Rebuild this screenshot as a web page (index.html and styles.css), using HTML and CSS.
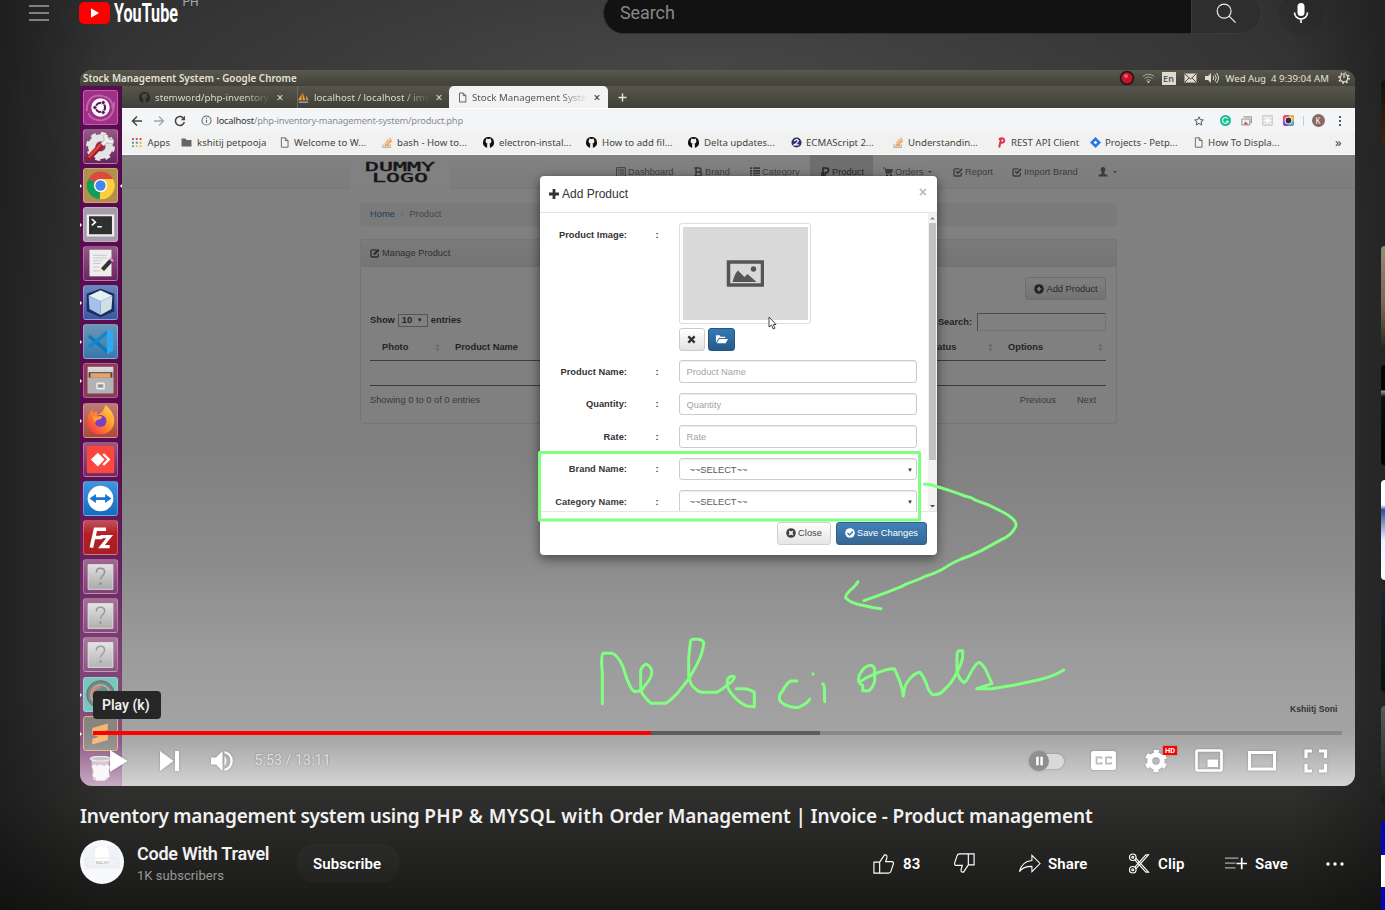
FILE: index.html
```html
<!DOCTYPE html>
<html lang="en">
<head>
<meta charset="utf-8">
<title>Inventory management system using PHP &amp; MYSQL - YouTube</title>
<link rel="stylesheet" href="styles.css">
</head>
<body>
<svg class="defs" width="0" height="0">
  <defs>
    <linearGradient id="gloss" x1="0" y1="0" x2="0" y2="1"><stop offset="0" stop-color="#dedede"/><stop offset="1" stop-color="#9d9d9d"/></linearGradient>
    <linearGradient id="fire" x1="1" y1="0" x2="0" y2="1"><stop offset="0" stop-color="#ffe54a"/><stop offset=".5" stop-color="#ff8a2a"/><stop offset="1" stop-color="#f5244b"/></linearGradient>
    <symbol id="github" viewBox="0 0 16 16"><path fill="currentColor" d="M8 0a8 8 0 0 0-2.500 15.600c.4.1.5-.2.5-.4v-3.700q0-1.500.6-2C4.500 9.200 3.800 8 3.800 6.300c0-1 .3-1.600.8-2.200-.1-.6-.2-1.300.2-2 .8 0 1.500.5 2.100.9q1.100-.2 2.200 0c.6-.4 1.300-.9 2.100-.9.4.7.3 1.400.2 2 .5.6.8 1.200.8 2.200 0 1.700-.7 2.900-2.800 3.200q.6.500.6 2v3.700c0 .2.1.5.5.4A8 8 0 0 0 8 0z"/></symbol>
    <symbol id="doc" viewBox="0 0 12 14"><path d="M2 1h5l3.500 3.500V13H2zM7 1v3.500h3.500" fill="none" stroke="currentColor" stroke-width="1.200"/></symbol>
    <symbol id="stack" viewBox="0 0 12 12"><path d="M1 8v3.300h8V8" fill="none" stroke="#b9b3aa" stroke-width="1.200"/><path d="M2.500 9.500h5M2.800 7.400l4.900.8M3.800 5l4.600 2M5.600 2.700l3.900 3.200M8.400.8l2 4.600" stroke="#eda15c" stroke-width="1.400"/></symbol>
    <symbol id="check" viewBox="0 0 12 12"><path d="M10 7v2.500a1.300 1.300 0 0 1-1.300 1.300H2.500a1.300 1.300 0 0 1-1.300-1.300v-6a1.300 1.300 0 0 1 1.300-1.300h5.300" fill="none" stroke="currentColor" stroke-width="1.600"/><path d="M3.800 5.200l2.200 2.200 5-5.200" fill="none" stroke="currentColor" stroke-width="1.900"/></symbol>
    <symbol id="edit" viewBox="0 0 12 12"><path d="M10 7v2.500a1.300 1.300 0 0 1-1.300 1.300H2.500a1.300 1.300 0 0 1-1.300-1.300v-6a1.300 1.300 0 0 1 1.300-1.300h5" fill="none" stroke="currentColor" stroke-width="1.600"/><path d="M4 8.500l.5-2.500L9.500 1l2 2-5 5z" fill="currentColor"/></symbol>
    <symbol id="sort" viewBox="0 0 6 10"><path d="M3 0l2.600 4H.4zM3 10L.4 6h5.200z" fill="#6a6a6a"/></symbol>
    <symbol id="unknown" viewBox="0 0 36 36"><path d="M4.500 5h27v27h-27z" fill="url(#gloss)" stroke="#ddd"/><path d="M13.500 13.500q0-4.500 4.500-4.500t4.500 4.200c0 4-4.500 4-4.500 8.300" fill="none" stroke="#868686" stroke-width="1.700"/><circle cx="18" cy="26" r="1.600" fill="#868686"/></symbol>
  </defs>
</svg>

<div class="page">
  <header class="masthead">
    <svg class="burger" viewBox="0 0 20 16"><path d="M0 1h20M0 8h20M0 15h20" stroke="#ddd" stroke-width="1.200"/></svg>
    <svg class="logo" viewBox="0 0 120 28">
      <rect x="0" y="3" width="31" height="22" rx="5" fill="#f00"/><path d="M12 9.300v9.400l8-4.700z" fill="#fff"/>
      <text x="35" y="23" class="wordmark" textLength="64" lengthAdjust="spacingAndGlyphs">YouTube</text>
      <text x="103.500" y="6.500" class="country">PH</text>
    </svg>
    <div class="searchbox">Search</div>
    <div class="searchbtn"><svg viewBox="0 0 22 22"><circle cx="8.500" cy="8.500" r="7.300" fill="none" stroke="#eee" stroke-width="1.200"/><path d="M13.700 13.700L20.500 20.500" stroke="#eee" stroke-width="1.300"/></svg></div>
    <div class="mic"><svg viewBox="0 0 16 22"><rect x="4.500" y="1" width="7" height="13" rx="3.500" fill="#fff"/><path d="M1.500 10.500a6.500 6.500 0 0 0 13 0M8 17v4" fill="none" stroke="#fff" stroke-width="1.600"/></svg></div>
  </header>

  <main class="player">
    <div class="desktop">
      <div class="menubar">
        <span class="wtitle">Stock Management System - Google Chrome</span>
        <div class="tray">
          <svg width="16" height="16" viewBox="0 0 16 16"><circle cx="8" cy="8" r="7.300" fill="#2b1518"/><circle cx="8" cy="8" r="5.500" fill="#c8132a"/><circle cx="7" cy="6" r="2" fill="#e06070"/></svg>
          <svg width="13" height="10" viewBox="0 0 13 10"><path d="M.8 3.500q5.700-4.600 11.400 0M2.500 5.500q4-3.100 8 0M4.300 7.500q2.200-1.700 4.400 0" fill="none" stroke="#a9a69b" stroke-width="1"/><circle cx="6.500" cy="9" r="1" fill="#ddd"/></svg>
          <span class="lang">En</span>
          <svg width="13" height="10" viewBox="0 0 13 10"><path d="M.5.5h12v9H.5z" fill="#dfdbd2"/><path d="M1 1l5.500 5L12 1M1 9l4-4m7 4L8 5" fill="none" stroke="#4a4941"/></svg>
          <svg width="14" height="12" viewBox="0 0 14 12"><path d="M0 4h3l3-3v10L3 8H0z" fill="#dfdbd2"/><path d="M8 4q1.500 2 0 4M9.800 2.500q3 3.500 0 7M11.500 1q4 5 0 10" fill="none" stroke="#dfdbd2"/></svg>
          <span class="clock">Wed Aug&nbsp; 4 9:39:04 AM</span>
          <svg width="12" height="12" viewBox="0 0 12 12"><circle cx="6" cy="6" r="3.800" fill="none" stroke="#dfdbd2" stroke-width="1.300"/><circle cx="6" cy="6" r="5" fill="none" stroke="#dfdbd2" stroke-width="1.800" stroke-dasharray="1.600 2.327"/><path d="M6 1v5" stroke="#4a4941" stroke-width="3"/><path d="M6 1v5" stroke="#dfdbd2" stroke-width="1.300"/></svg>
        </div>
      </div>
      <div class="work">
        <nav class="launcher">
          <div class="tile ubuntu"><svg viewBox="0 0 36 36"><path d="M3 22Q3 4 18 5q14 2 13 14M33 12q0 18-14 20Q7 32 5 24" fill="none" stroke="#d68cc0" stroke-width="2" opacity=".6"/><circle cx="18" cy="18" r="10" fill="#fff"/><circle cx="18" cy="18" r="5" fill="none" stroke="#5e1750" stroke-width="2.400"/><g fill="#5e1750" stroke="#fff" stroke-width=".8"><circle cx="11.800" cy="18" r="2.200"/><circle cx="21" cy="12.600" r="2.200"/><circle cx="21" cy="23.400" r="2.200"/></g></svg></div>
          <div class="tile glassy"><svg viewBox="0 0 36 36"><circle cx="18" cy="18" r="9.500" fill="none" stroke="#e4e4e4" stroke-width="8"/><circle cx="18" cy="18" r="13.800" fill="none" stroke="#e4e4e4" stroke-width="4" stroke-dasharray="5.420 5.420"/><path d="M6 30L19 16" stroke="#9f1b1b" stroke-width="6" stroke-linecap="round"/><path d="M6 29L18 16" stroke="#e04040" stroke-width="3" stroke-linecap="round"/><path d="M20 16l5-5M24 5q-2 8 8 8" fill="none" stroke="#aaa" stroke-width="5"/><path d="M20 16l5-5M24 5q-2 8 8 8" fill="none" stroke="#f0f0f0" stroke-width="3.500"/></svg></div>
          <div class="tile gold running focused"><svg viewBox="0 0 36 36"><path d="M18 18L5 10.500A15 15 0 0 1 31.500 11z" fill="#dc4a3d"/><path d="M18 18l13.500-7.500A15 15 0 0 1 17 33z" fill="#fdcf40"/><path d="M18 18l-1 15A15 15 0 0 1 5 10.500z" fill="#109d58"/><path d="M18 11h13.500L24 21z" fill="#fdcf40"/><circle cx="18" cy="18" r="7.200" fill="#fff"/><circle cx="18" cy="18" r="5.600" fill="#4286ee"/></svg></div>
          <div class="tile silver running"><svg viewBox="0 0 36 36"><path d="M3 7h30v24H3z" fill="#eee"/><path d="M5.500 9h25v19.500h-25z" fill="#2d302f"/><path d="M8.500 12l4 3.500-4 3.500M14.500 20.500h5" fill="none" stroke="#fff" stroke-width="1.700"/></svg></div>
          <div class="tile glassy"><svg viewBox="0 0 36 36"><path d="M6 3h24v29H6z" fill="#eee"/><path d="M10 9h15M10 12h15M10 15h10M10 18h8M10 22h6M10 26h9" stroke="#c4c4c4"/><path d="M20 25L30 14" stroke="#333" stroke-width="4.500"/><path d="M17 28l1-5 3.500 3z" fill="#eff0a0"/><path d="M29 15l2-2" stroke="#cf8fc1" stroke-width="5"/></svg></div>
          <div class="tile navy running"><svg viewBox="0 0 36 36"><path d="M18 3l15 5.500v19L18 34 3 27.500v-19z" fill="#1c2d5c"/><path d="M18 4.500l13 6-13 6-13-6z" fill="#e4f2f4"/><path d="M5 10.500l13 6v15l-12-6.500z" fill="#a5c0ec"/><path d="M31 10.500l-13 6v15L30 25z" fill="#cfdfe6"/></svg></div>
          <div class="tile azure running"><svg viewBox="0 0 36 36"><path d="M4 13l3-2 19 16v5z" fill="#0b7bc0"/><path d="M4 23l3 2L26 10V5z" fill="#1386d0"/><path d="M25 4l7 4v20l-7 4z" fill="#2fa8f3"/></svg></div>
          <div class="tile rose running"><svg viewBox="0 0 36 36"><path d="M4 3h28v29H4z" fill="url(#gloss)"/><path d="M5 9h26v6H5z" fill="#4c3b33"/><path d="M7 10h22v5H7z" fill="#e8a070"/><path d="M4 15h28v17H4z" fill="#b3b3b3"/><rect x="14" y="21" width="8" height="6" rx="1" fill="none" stroke="#eee" stroke-width="1.500"/><path d="M16 24h4" stroke="#666"/></svg></div>
          <div class="tile coral running"><svg viewBox="0 0 36 36"><path d="M18 33C8 33 3 26 3.500 18 4 12 7 8 9 6l1 4 4-2v4q6-2 8-7 1-3 1-4c5 3 10 10 10 17 0 9-6 15-15 15z" fill="url(#fire)"/><circle cx="18" cy="18.500" r="6.500" fill="#7a3fc4"/><path d="M9 14l9-1q4 1-1 4-4 0-5 4z" fill="#ff9a34"/></svg></div>
          <div class="tile glassy"><svg viewBox="0 0 36 36"><rect x="3" y="3" width="30" height="30" rx="2" fill="#fb453d"/><path d="M15 10.500l7.500 7.500-7.500 7.500L7.500 18z" fill="#fff"/><path d="M21 12l6 6-6 6" fill="none" stroke="#fff" stroke-width="2.600"/></svg></div>
          <div class="tile blue"><svg viewBox="0 0 36 36"><circle cx="18" cy="18" r="14" fill="#fff"/><path d="M6 18l7-5v3.500h10V13l7 5-7 5v-3.500H13V23z" fill="#0e72cf"/></svg></div>
          <div class="tile red"><svg viewBox="0 0 36 36"><path d="M8 29l4.500-20H24M11 18h9" fill="none" stroke="#fff" stroke-width="4"/><path d="M18 17h10L19 28h9" fill="none" stroke="#fff" stroke-width="3.500"/></svg></div>
          <div class="tile glassy"><svg><use href="#unknown"/></svg></div>
          <div class="tile glassy"><svg><use href="#unknown"/></svg></div>
          <div class="tile glassy"><svg><use href="#unknown"/></svg></div>
          <div class="tile teal running"><svg viewBox="0 0 36 36"><circle cx="18" cy="18" r="15" fill="#575e5d" stroke="#333"/><circle cx="18" cy="18" r="10.500" fill="#376e67" stroke="#8b9b98" stroke-width="2"/><path d="M9 19q1-9 9-9" stroke="#c35c47" stroke-width="3" fill="none"/></svg></div>
          <div class="tile gray running"><svg viewBox="0 0 36 36"><path d="M9 12l17-5v7l-8 3 8 2v6L9 30v-6l7-2.500L9 19z" fill="#f79a35"/></svg></div>
          <div class="tile trash"><svg viewBox="0 0 36 36"><path d="M8 4h20l-2 22q-8 3-16 0z" fill="#b48aae"/><ellipse cx="18" cy="3" rx="11" ry="2.500" fill="#999" stroke="#ddd" stroke-width="1.300"/><path d="M8 11l4-2 2 2 4-2 4 2 3-2 4 3-2 4 1 7-4 1-2 3-4-1-4 1-2-4-3-1 2-6z" fill="#f0f0f0"/></svg></div>
        </nav>
        <section class="browser">
          <div class="tabs">
            <div class="tab t1"><svg class="ghtab" width="11" height="11"><use href="#github"/></svg><span class="tname">stemword/php-inventory</span><b>×</b></div>
            <div class="tab t2"><svg width="11" height="11" viewBox="0 0 12 12"><path d="M0 9l4-7v7zM5 9V0l3 9zM9 9V3l2.500 6z" fill="#f29b26"/><path d="M1 11h10" stroke="#8a8fb5" stroke-width="2"/></svg><span class="tname">localhost / localhost / ims</span><b>×</b></div>
            <div class="tab active"><svg width="9" height="11"><use href="#doc"/></svg><span class="tname">Stock Management Syster</span><b>×</b></div>
            <svg class="plus" width="9" height="9" viewBox="0 0 9 9"><path d="M4.500.5v8M.5 4.500h8" stroke="#e5e5e0" stroke-width="1.400"/></svg>
          </div>
          <div class="toolbar">
            <svg class="ic back" viewBox="0 0 12 12"><path d="M11 6H1.500M6 1.500L1.500 6 6 10.500" fill="none" stroke="#444" stroke-width="1.500"/></svg>
            <svg class="ic fwd" viewBox="0 0 12 12"><path d="M1 6h9.500M6 1.500L10.500 6 6 10.500" fill="none" stroke="#a5a5a5" stroke-width="1.300"/></svg>
            <svg class="ic reload" viewBox="0 0 12 12"><path d="M10.300 7A4.500 4.500 0 1 1 9 2.700L10.500 4" fill="none" stroke="#444" stroke-width="1.500"/><path d="M11 .8v4.400H6.800z" fill="#444"/></svg>
            <svg class="ic info" viewBox="0 0 12 12"><circle cx="6" cy="6" r="5" fill="none" stroke="#666" stroke-width="1.100"/><path d="M6 5.200v3.600M6 3v1.300" stroke="#666" stroke-width="1.200"/></svg>
            <span class="url"><i>localhost</i>/php-inventory-management-system/product.php</span>
            <div class="exts">
              <svg width="10" height="10" viewBox="0 0 12 12"><path d="M6 1l1.500 3.400 3.700.3-2.800 2.500.9 3.600L6 8.900l-3.300 1.900.9-3.600L.8 4.700l3.700-.3z" fill="none" stroke="#555" stroke-width="1.200"/></svg>
              <svg class="gram" width="11" height="11" viewBox="0 0 12 12"><circle cx="6" cy="6" r="6" fill="#19bd94"/><path d="M8.600 4A3.200 3.200 0 1 0 9 7H6.500" fill="none" stroke="#e8fff8" stroke-width="1.200"/></svg>
              <svg width="11" height="10" viewBox="0 0 11 10"><path d="M2.500.8h8v6h-2" fill="#ddd" stroke="#999"/><path d="M.8 3h8v6h-8z" fill="#eee" stroke="#999"/><path d="M2.500 8.500l2-3 3 3z" fill="#d25246"/></svg>
              <svg width="11" height="11" viewBox="0 0 11 11"><path d="M.5.5h10v10H.5z" fill="#ddd" stroke="#d0d0d0"/><path d="M2 2l7 7M9 2L2 9M5.500 1.500v8M1.500 5.500h8" stroke="#fff"/></svg>
              <svg width="11" height="11" viewBox="0 0 11 11"><rect width="11" height="11" rx="2" fill="#e94b75"/><path d="M0 6h5v5H2L0 9z" fill="#784fe5"/><path d="M6 6h5v3L9 11H6z" fill="#35aee0"/><path d="M6 0h3l2 2v4H6z" fill="#f3b43b"/><circle cx="5.500" cy="5.500" r="3.800" fill="#fff"/><circle cx="5.500" cy="5.500" r="2.900" fill="#333"/></svg>
              <span class="vsep"></span><span class="me">K</span>
              <svg width="4" height="12" viewBox="0 0 4 12"><path d="M1 1h2v2H1zM1 5h2v2H1zM1 9h2v2H1z" fill="#555"/></svg>
            </div>
          </div>
          <div class="bookmarks">
            <span class="bm b0"><svg viewBox="0 0 10 10"><path d="M0 0h2v2H0zM4 0h2v2H4zM8 0h2v2H8z" fill="#df4b3f"/><path d="M0 4h2v2H0zM0 8h2v2H0z" fill="#3aa757"/><path d="M4 4h2v2H4z" fill="#4285f4"/><path d="M8 4h2v2H8zM4 8h2v2H4zM8 8h2v2H8z" fill="#e7b32c"/></svg>Apps</span>
            <span class="bm b1"><svg viewBox="0 0 11 10"><path d="M.5 1h4l1 1.500h5V9H.5z" fill="#666"/></svg>kshitij petpooja</span>
            <span class="bm b2"><svg><use href="#doc"/></svg>Welcome to W...</span>
            <span class="bm b3"><svg><use href="#stack"/></svg>bash - How to...</span>
            <span class="bm b4"><svg class="dark"><use href="#github"/></svg>electron-instal...</span>
            <span class="bm b5"><svg class="dark"><use href="#github"/></svg>How to add fil...</span>
            <span class="bm b6"><svg class="dark"><use href="#github"/></svg>Delta updates...</span>
            <span class="bm b7"><svg viewBox="0 0 12 12"><circle cx="6" cy="6" r="5.500" fill="#32316f"/><path d="M3.500 4.500q2.500-3 4.500-.5 0 1.500-4.500 4.500h5" fill="none" stroke="#fff" stroke-width="1.300"/></svg>ECMAScript 2...</span>
            <span class="bm b8"><svg><use href="#stack"/></svg>Understandin...</span>
            <span class="bm b9"><svg viewBox="0 0 12 12"><path d="M3.500 11.500L5.500 2M3 2.500q6-2.500 6 1.200 0 3-5 2.800" fill="none" stroke="#dc3551" stroke-width="2.200"/></svg>REST API Client</span>
            <span class="bm b10"><svg viewBox="0 0 12 12"><path d="M6 0l6 6-6 6-6-6z" fill="#2579e6"/><path d="M6 4l2 2-2 2-2-2z" fill="#fff"/></svg>Projects - Petp...</span>
            <span class="bm b11"><svg><use href="#doc"/></svg>How To Displa...</span>
            <span class="more">»</span>
          </div>
          <div class="web">
            <div class="navbar">
              <svg class="brandlogo" viewBox="0 0 100 34"><rect width="100" height="34" fill="#818181"/><text x="15" y="16" textLength="70" lengthAdjust="spacingAndGlyphs">DUMMY</text><text x="22" y="27" textLength="56" lengthAdjust="spacingAndGlyphs">LOGO</text></svg>
              <span class="nv n1"><svg viewBox="0 0 10 10"><path d="M.7.7h8.600v8.600H.7zM2 3h6M4 5h4M4 7h4M2.300 5h1M2.300 7h1" fill="none" stroke="currentColor"/></svg>Dashboard</span>
              <span class="nv n2"><svg viewBox="0 0 10 10"><path d="M1 1h4.500q3 0 2.500 2T5.500 5Q9 5 8.500 7T5.500 9H1M3 1v8M3 5h3M4 0v1M4 9v1" fill="none" stroke="currentColor" stroke-width="1.600"/></svg>Brand</span>
              <span class="nv n3"><svg viewBox="0 0 10 10"><path d="M0 1.200h2M0 3.800h2M0 6.400h2M0 9h2M3.200 1.200H10M3.200 3.800H10M3.200 6.400H10M3.200 9H10" stroke="currentColor" stroke-width="1.700"/></svg>Category</span>
              <span class="nv n4 on"><svg viewBox="0 0 10 10"><path d="M3 10V1h3q3 0 2.500 2.500T5.500 6H1M1 8h5" fill="none" stroke="currentColor" stroke-width="1.600"/></svg>Product</span>
              <span class="nv n5"><svg viewBox="0 0 10 10"><path d="M0 1h2l1.500 6H9" fill="none" stroke="currentColor"/><path d="M2.500 2H10L9 6H3.500z" fill="currentColor"/><circle cx="4" cy="9" r="1"/><circle cx="8" cy="9" r="1"/></svg>Orders<em class="caret"></em></span>
              <span class="nv n6"><svg><use href="#check"/></svg>Report</span>
              <span class="nv n7"><svg><use href="#check"/></svg>Import Brand</span>
              <span class="nv n8"><svg viewBox="0 0 10 10"><path d="M5 0q2.500 0 2.300 3Q7 5 6 6q0 1 3.500 2v1.500H.5V8Q4 7 4 6 3 5 2.700 3 2.500 0 5 0z" fill="currentColor"/></svg><em class="caret"></em></span>
            </div>
            <div class="container">
              <div class="crumb"><a>Home</a><s>/</s><span>Product</span></div>
              <div class="panel">
                <div class="phead"><svg><use href="#edit"/></svg>Manage Product</div>
                <div class="pbody">
                  <div class="addrow"><span class="btn"><svg viewBox="0 0 10 10"><circle cx="5" cy="5" r="4.800" fill="#222"/><path d="M5 2.800v4.400M2.800 5h4.400" stroke="#7c7c7c" stroke-width="1.700"/></svg>Add Product</span></div>
                  <div class="filter"><span class="show">Show <span class="sel">10<small>▼</small></span> entries</span><span class="srch">Search: <span class="field"></span></span></div>
                  <div class="thead"><span class="c1">Photo</span><svg><use href="#sort"/></svg><span class="c2">Product Name</span><span class="c3">Status</span><svg><use href="#sort"/></svg><span class="c4">Options</span><svg><use href="#sort"/></svg></div>
                  <div class="tempty"></div>
                  <div class="tfoot"><span>Showing 0 to 0 of 0 entries</span><span class="prev">Previous</span><span>Next</span></div>
                </div>
              </div>
            </div>
          </div>
        </section>
      </div>
    </div>

    <div class="modal">
      <div class="mhead"><svg viewBox="0 0 10 10"><path d="M5 0v10M0 5h10" stroke="#333" stroke-width="2.800"/></svg><span>Add Product</span><b>×</b></div>
      <div class="mbody">
        <div class="form">
          <div class="row tall"><label>Product Image:</label><i>:</i>
            <div class="upload">
              <div class="thumb"><svg viewBox="0 0 38 28"><path d="M2 2h34v23H2z" fill="none" stroke="#555" stroke-width="3.500"/><path d="M6 22q2-8 5.500-11.500L18 17l3-3 9 8z" fill="#555"/><circle cx="27" cy="9" r="2.700" fill="#555"/></svg></div>
              <div class="btns"><span class="x"><svg viewBox="0 0 10 10"><path d="M1.500 1.500l7 7M8.500 1.500l-7 7" stroke="#333" stroke-width="2.600"/></svg></span><span class="open"><svg viewBox="0 0 14 10"><path d="M1 9V1h4l1 1.500h5v1.500H4z" fill="#fff"/><path d="M4.500 5H14l-2.500 4.500H2z" fill="#fff"/></svg></span></div>
            </div>
          </div>
          <div class="row"><label>Product Name:</label><i>:</i><div class="inp">Product Name</div></div>
          <div class="row"><label>Quantity:</label><i>:</i><div class="inp">Quantity</div></div>
          <div class="row"><label>Rate:</label><i>:</i><div class="inp">Rate</div></div>
          <div class="row"><label>Brand Name:</label><i>:</i><div class="inp pick"><span>~~SELECT~~</span><small>▼</small></div></div>
          <div class="row"><label>Category Name:</label><i>:</i><div class="inp pick"><span>~~SELECT~~</span><small>▼</small></div></div>
        </div>
        <div class="scroll"><svg viewBox="0 0 9 10"><path d="M2 6.500h5L4.500 4z" fill="#888"/></svg><div class="grip"></div><svg class="down" viewBox="0 0 9 10"><path d="M2 4h5L4.500 6.500z" fill="#444"/></svg></div>
      </div>
      <div class="mfoot">
        <span class="close"><svg viewBox="0 0 10 10"><circle cx="5" cy="5" r="4.800" fill="#333"/><path d="M3.200 3.200l3.600 3.600M6.800 3.200L3.200 6.800" stroke="#f4f4f4" stroke-width="1.700"/></svg>Close</span>
        <span class="save"><svg viewBox="0 0 10 10"><circle cx="5" cy="5" r="4.800" fill="#fff"/><path d="M2.500 5l2 2 3.300-3.500" fill="none" stroke="#2f6ea5" stroke-width="1.500"/></svg>Save Changes</span>
      </div>
    </div>
    <svg class="pointer" viewBox="0 0 9 14"><path d="M1 1v10l2.500-2 1.700 4 1.800-.8-1.700-3.700H8z" fill="#fff" stroke="#444"/></svg>
    <div class="fade"></div>
    <div class="watermark">Kshiitj Soni</div>

    <div class="chrome">
      <div class="progress"><div class="played"></div><div class="loaded"></div></div>
      <div class="controls">
        <svg class="play" viewBox="0 0 18 22"><path d="M0 0v22l17.500-11z"/></svg>
        <svg class="next" viewBox="0 0 20 20"><path d="M0 0v20l13.500-10zM15 0h4v20h-4z"/></svg>
        <svg class="vol" viewBox="0 0 22 20"><path d="M0 6.500h5L11.500 0v20L5 13.500H0z"/><path d="M13.500 5q4 5 0 10z"/><path d="M13.500 1.200a9 9 0 0 1 0 17.600" fill="none" stroke="#fff" stroke-width="2.400"/></svg>
        <span class="time">5:53 / 13:11</span>
        <span class="auto"><span class="knob"><svg viewBox="0 0 10 12"><path d="M1 1h3v10H1zM6 1h3v10H6z"/></svg></span></span>
        <svg class="cc" viewBox="0 0 26 20"><rect width="25" height="19" rx="2.500"/><path d="M10.500 8V6.300h-5v6.400h5V11M20 8V6.300h-5v6.400h5V11" fill="none" stroke="#bbb" stroke-width="1.700"/></svg>
        <span class="gear"><svg viewBox="0 0 24 24"><circle cx="12" cy="12" r="6.200" fill="none" stroke="#fff" stroke-width="5"/><circle cx="12" cy="12" r="9.500" fill="none" stroke="#fff" stroke-width="3.300" stroke-dasharray="4.974 4.974" stroke-dashoffset="-2.487"/></svg><em>HD</em></span>
        <svg class="mini" viewBox="0 0 28 24"><rect x="1.500" y="1.500" width="25" height="20" rx="1.500" fill="none" stroke="#fff" stroke-width="2.700"/><path d="M12.500 10.500h10.500V18H12.500z"/></svg>
        <svg class="theater" viewBox="0 0 28 20"><rect x="1.500" y="1.500" width="25" height="16.500" fill="none" stroke="#fff" stroke-width="3"/></svg>
        <svg class="full" viewBox="0 0 24 24"><path d="M2 9V2h6M15 2h6.500v7M2 15v7h6M15 22h6.500v-7" fill="none" stroke="#fff" stroke-width="3.200"/></svg>
      </div>
    </div>
    <div class="tip">Play (k)</div>
  </main>

  <section class="meta">
    <h1><span class="lead">Inventory management system using </span><span class="caps">PHP &amp; MYSQL with </span>Order Management | Invoice - Product management</h1>
    <div class="owner">
      <div class="avatar"><svg viewBox="0 0 44 44"><rect y="6" x="4" width="36" height="23" fill="#eff2f8"/><path d="M15 24V13q0-7 7-7t7 7v11z" fill="#fff"/><path d="M6 18h32v8H6z" fill="none" stroke="#eeeae2"/><text x="15.500" y="24">WACKZ</text></svg></div>
      <div class="chan"><strong>Code With Travel</strong><span>1K subscribers</span></div>
      <div class="subscribe">Subscribe</div>
      <div class="actions">
        <span class="act like"><svg viewBox="0 0 24 24"><path d="M8 10.500l5-7.500q3.300-.4 2.500 3L14.300 10H21q2 .7 1.200 2.800L19.800 20q-.6 2-2.600 2H2V10.500zM8 10.500V22" fill="none" stroke="#fff" stroke-width="1.200"/></svg>83</span>
        <span class="act dislike"><svg viewBox="0 0 24 24"><path d="M16 13.500l-5 7.500q-3.300.4-2.500-3L9.700 14H3q-2-.7-1.200-2.800L4.200 4q.6-2 2.600-2H22v11.500zM16 13.500V2" fill="none" stroke="#fff" stroke-width="1.200"/></svg></span>
        <span class="act share"><svg viewBox="0 0 24 24"><path d="M14.500 3.500v5.300C7 9.500 3 13.500 1.500 20.500c3-4 7-5.600 13-5.500v5.500L23 12z" fill="none" stroke="#fff" stroke-width="1.100"/></svg>Share</span>
        <span class="act clip"><svg viewBox="0 0 24 24"><g fill="none" stroke="#fff" stroke-width="1.200"><circle cx="5" cy="5.500" r="3.400"/><circle cx="5" cy="18.500" r="3.400"/><circle cx="5" cy="5.500" r="1"/><circle cx="5" cy="18.500" r="1"/><path d="M7.100 8.200L18.700 21h2.700L8.100 6.300M7.100 15.800L18.700 3h2.700L8.100 17.700"/></g></svg>Clip</span>
        <span class="act keep"><svg viewBox="0 0 24 24"><path d="M1 6.500h14M1 11.500h11M1 16.500h11" stroke="#aaa" stroke-width="1.300"/><path d="M18.500 6v12M13 12h11" stroke="#fff" stroke-width="1.800"/></svg>Save</span>
        <svg class="dots" viewBox="0 0 18 4"><circle cx="2" cy="2" r="1.700"/><circle cx="9" cy="2" r="1.700"/><circle cx="16" cy="2" r="1.700"/></svg>
      </div>
    </div>
  </section>

  <aside class="related"><i class="r1"></i><i class="r2"></i><i class="r3"></i><i class="r4"></i><i class="r5"></i><i class="r6"></i><i class="r7"></i></aside>

  <svg class="ink" viewBox="0 0 1385 910">
    <rect x="539.500" y="452.500" width="380" height="67.500" stroke-linejoin="round"/>
    <g transform="translate(530 360) scale(.33333)">
      <path d="M1183 373q12-2 32 5l45 14q24 8 44 16 20 3 36 14 16 6 36 13l36 18q24 11 38 25 12 12 6 24-12 24-42 37l-60 33q-30 15-60 25-40 18-50 27-30 17-56 24-20 10-40 17-20 6-34 15l-36 14-40 15-36 13"/>
      <path d="M984 665q-7 12-25 27-15 17-12 22 12 12 30 17l54 12 22 3"/>
    </g>
    <g transform="translate(580 610) scale(.33333)">
      <path d="M67 281V192L65 160Q65 132 69 130H97Q112 134 128 168L140 205L152 232Q160 248 170 244H183Q190 232 203 216Q217 198 215 180Q208 163 197 163Q182 172 182 185V240Q188 258 213 280H258Q276 268 292 250L325 208Q352 165 362 138Q371 112 371 98Q366 88 352 88H336Q330 90 331 100Q325 140 326 170V200Q332 228 348 238Q355 246 368 247H410Q425 240 438 228Q466 208 463 200Q450 196 443 208Q438 228 450 245Q470 275 500 288L523 290V246Q506 236 492 236H469"/>
      <path d="M651 213h-20q-14 10-25 33-10 8-7 24 4 10 23 17 18 8 33 5 26-10 34-24"/>
      <path d="M699 191v1M728 221q5 0 5 17l1 37"/>
      <path d="M838 217Q862 200 886 191Q918 176 943 176Q956 204 962 222Q968 240 970 258Q972 230 982 216Q1002 188 1020 187Q1030 198 1038 218Q1046 246 1058 254Q1080 255 1092 240Q1116 220 1130 188Q1146 160 1148 140V122H1136Q1130 130 1131 140V185Q1136 205 1151 218Q1160 214 1168 196Q1186 160 1197 157Q1212 166 1220 186L1236 221L1220 226L1190 236H1235L1300 226L1370 211Q1420 200 1451 180M884 191V176Q880 166 868 166Q852 170 842 188Q834 198 836 215Q840 224 848 226V242H868Q880 230 884 215V191"/>
    </g>
  </svg>
</div>
</body>
</html>
```
FILE: styles.css
```css
* { box-sizing: border-box; }
body { margin: 0; overflow: hidden; background: #1c1c1c; font-family: Roboto, sans-serif; color: #fff; }
i, em { font-style: normal; }
svg { display: block; flex: none; }
.defs { position: absolute; }
.page {
  position: relative; width: 1385px; height: 910px; overflow: hidden;
  display: flex; flex-direction: column;
  background:
    linear-gradient(to right, rgba(10,10,10,.45) 0, transparent 110px, transparent 1290px, rgba(10,10,10,.35) 1385px),
    radial-gradient(ellipse 700px 240px at 700px 100px, rgba(255,255,255,.12), transparent),
    linear-gradient(to bottom, #2f2f2f 0, #343434 300px, #343434 700px, #2e2e2d 800px, #181817 910px);
}

/* masthead */
.masthead { display: flex; align-items: center; height: 54px; margin-top: -14px; flex: none; }
.burger { width: 20px; height: 16px; margin: -1px 0 0 29px; }
.logo { width: 120px; height: 28px; margin: 0 404px 0 30px; overflow: visible; }
.wordmark { font: 700 25px Roboto, sans-serif; fill: #fff; }
.country { font: 12px Roboto, sans-serif; fill: #aaa; }
.searchbox { width: 588px; height: 42px; border: 1px solid #303030; border-right: 0; border-radius: 21px 0 0 21px; background: #121212; color: #888; font-size: 18px; line-height: 39px; padding-left: 16px; letter-spacing: -.1px; }
.searchbtn { width: 71px; height: 42px; border: 1px solid #3a3a3a; border-radius: 0 21px 21px 0; background: #2e2e2e; display: grid; place-items: center; }
.searchbtn svg { width: 21px; height: 21px; }
.mic { width: 44px; height: 44px; margin-left: 17px; border-radius: 50%; background: rgba(30,30,30,.15); display: grid; place-items: center; }
.mic svg { width: 16px; height: 22px; }

/* player */
.player { position: relative; flex: none; width: 1275px; height: 716px; margin: 30px 0 0 80px; border-radius: 12px; overflow: hidden; background: #808080; }
.desktop { height: 716px; display: flex; flex-direction: column; font-family: "Noto Sans", sans-serif; }
.menubar { display: flex; align-items: center; justify-content: space-between; height: 16px; padding: 0 5.500px 0 3px; background: linear-gradient(#59584c, #42413a); color: #e6e2d8; font-size: 9.800px; }
.wtitle { font-weight: 600; letter-spacing: .04px; }
.tray { display: flex; align-items: center; }
.tray > * { margin-left: 7px; }
.tray > :nth-child(4), .tray > :nth-child(5) { margin-left: 8px; }
.tray > :last-child { margin-left: 8px; }
.lang { width: 14px; height: 13px; background: #dfdbd2; color: #555; font-size: 9px; line-height: 13px; text-align: center; font-weight: 600; }
.clock { width: 104px; white-space: nowrap; font-size: 9.600px; }
.work { flex: 1; display: flex; min-height: 0; }
.launcher { width: 42px; padding: 3.500px 0 0 3px; display: flex; flex-direction: column; gap: 4.150px; background: #5b0b50; border-right: 1px solid #4b0842; }
.tile { position: relative; width: 35px; height: 35px; flex: none; border-radius: 3px; border: 1px solid rgba(255,255,255,.25); background: linear-gradient(#955886, #6b2360); }
.tile svg { width: 33px; height: 33px; }
.tile.ubuntu { background: #a02f87; }
.tile.gold { background: #b28f4b; }
.tile.silver { background: #a79cab; }
.tile.navy { background: linear-gradient(#6b86bc, #3b57a4); }
.tile.azure { background: linear-gradient(#6e96b4, #3679ad); }
.tile.rose { background: #8c3a56; }
.tile.coral { background: linear-gradient(#bd7a76, #ad483a); }
.tile.blue { background: linear-gradient(#3c92dc, #0863bd); }
.tile.red { background: linear-gradient(#b94550, #b00d15 40%, #9e0a0f); }
.tile.teal { background: #4fb3a6; }
.tile.gray { background: #5a5653; border-color: #d89348; }
.tile.trash { border-color: transparent; background: none; }
.running::before { content: ""; position: absolute; left: -4px; top: 15px; border: 2px solid transparent; border-left-color: #fff; }
.focused::after { content: ""; position: absolute; right: -5px; top: 15px; border: 2px solid transparent; border-right-color: #fff; }

/* browser */
.browser { flex: 1; min-width: 0; display: flex; flex-direction: column; }
.tabs { height: 22px; display: flex; align-items: center; padding-left: 17px; background: linear-gradient(#57564b, #403f39); font-size: 9.700px; color: #dcdad2; }
.tab { display: flex; align-items: center; height: 22px; white-space: nowrap; }
.tab b { font-size: 12px; font-weight: 400; width: 10px; text-align: center; }
.tname { overflow: hidden; width: 118px; margin: 0 2px 0 5px; -webkit-mask-image: linear-gradient(to right, #000 75%, transparent 98%); mask-image: linear-gradient(to right, #000 75%, transparent 98%); }
.t1 { width: 158px; }
.t1 .ghtab { color: #292927; }
.t2 { width: 152px; border-left: 1px solid #6b6a62; }
.t2 .tname { margin-left: 5px; }
.tab.active { width: 159px; padding-left: 9px; background: #f3f3f1; color: #555; border-radius: 5px 5px 0 0; }
.active .tname { width: 118px; }
.active b { color: #333; }
.plus { margin-left: 10px; }
.toolbar { height: 24px; display: flex; align-items: center; background: #f4f5f7; padding-left: 9px; border-top: 1px solid #fff; }
.ic { width: 12px; height: 12px; margin-right: 9.500px; }
.reload { margin-right: 14.500px; }
.info { width: 11px; height: 11px; margin-right: 5px; }
.url { font-size: 9.300px; color: #8a8d91; letter-spacing: -.21px; }
.url i { color: #333; }
.exts { margin-left: auto; display: flex; align-items: center; gap: 10px; padding-right: 13.500px; }
.gram { margin-left: 6px; }
.vsep { width: 1px; height: 10px; background: #ccc; margin: 0 -2px 0 -1px; }
.me { width: 13px; height: 13px; border-radius: 50%; background: #8b6762; color: #fff; font-size: 8px; line-height: 13px; text-align: center; margin-right: 3px; }
.bookmarks { height: 22.500px; display: flex; align-items: center; padding: 0 0 1px 10px; background: #f1f1ef; border-bottom: 1px solid #fafafa; color: #444; font-size: 9.650px; white-space: nowrap; }
.bm { display: flex; align-items: center; gap: 4px; flex: none; overflow: hidden; }
.bm svg { width: 11px; height: 11px; color: #666; }
.bm svg.dark { color: #111; }
.b0 { width: 49px; } .b0 svg { width: 9.500px; height: 9.500px; margin-right: 2px; }
.b1 { width: 98px; } .b1 svg { margin-right: 1px; }
.b2 { width: 103px; }
.b3 { width: 101px; }
.b4 { width: 103px; } .bm svg.dark { margin-right: 1px; }
.b5 { width: 102px; }
.b6 { width: 103px; }
.b7 { width: 102px; }
.b8 { width: 103px; }
.b9 { width: 94px; }
.b10 { width: 103px; }
.b11 { width: 142px; }
.more { font-size: 13px; line-height: 14px; }

/* web page under the backdrop */
.web { flex: 1; background: #808080; color: #393939; font: 9.300px "Liberation Sans", Arial, sans-serif; }
.navbar { display: flex; height: 34.500px; background: linear-gradient(#818181, #7c7c7c); border-bottom: 1px solid #777; color: #3c3c3c; }
.brandlogo { width: 100px; height: 34px; margin-left: 228px; margin-right: 166px; }
.brandlogo text { font: 11.500px "DejaVu Sans Mono", monospace; fill: #151515; stroke: #151515; stroke-width: .4; }
.nv { display: flex; align-items: center; gap: 2px; flex: none; white-space: nowrap; padding-top: 1px; }
.nv svg { width: 10px; height: 10px; }
.n1 { width: 77px; } .n2 { width: 57px; } .n3 { width: 60px; }
.n4 { width: 63px; padding-left: 10px; background: #6e6e6e; color: #262626; }
.n5 { width: 80px; padding-left: 10px; } .n6 { width: 59px; } .n7 { width: 86px; }
.caret { border: 2.500px solid transparent; border-top-color: currentColor; border-bottom: 0; margin-left: 3px; }
.container { width: 757px; margin: 13.500px 0 0 238px; }
.crumb { display: flex; gap: 6px; height: 23px; align-items: center; padding: 0 0 1px 10px; background: #7a7a7a; border-radius: 3px; color: #474747; }
.crumb a { color: #1a3e5e; }
.crumb s { text-decoration: none; color: #666; }
.panel { margin-top: 13px; height: 185px; border: 1px solid #757575; border-radius: 3px; }
.phead { display: flex; align-items: center; gap: 2px; height: 27px; padding-left: 9px; background: linear-gradient(#7b7b7b, #747474); color: #2e2e2e; }
.phead svg { width: 10px; height: 10px; }
.pbody { padding: 10px 10px 0 9px; }
.addrow { display: flex; justify-content: flex-end; }
.btn { display: flex; align-items: center; gap: 3px; height: 23px; width: 81px; padding: 1px 0 0 7.500px; border: 1px solid #6d6d6d; border-radius: 3px; background: linear-gradient(#808080, #737373); color: #2b2b2b; white-space: nowrap; }
.btn svg { width: 10px; height: 10px; }
.filter { display: flex; justify-content: space-between; align-items: center; height: 18px; margin-top: 13.500px; font-weight: 700; color: #242424; }
.show, .srch { display: flex; align-items: center; gap: 3px; }
.show { margin-top: -4px; }
.sel { width: 30px; height: 13px; border: 1px solid #555; display: flex; align-items: center; justify-content: space-between; padding: 0 4px 0 3px; }
.sel small { font-size: 6px; }
.field { width: 129px; height: 17.500px; margin-left: 2px; border: 1px solid #747474; border-top-color: #4d4d4d; border-left-color: #4d4d4d; }
.thead { display: flex; align-items: center; height: 30px; padding: 3px 0 0 12px; border-bottom: 1px solid #3c3c3c; font-weight: 700; color: #242424; }
.thead svg { width: 5px; height: 9px; }
.c1 { width: 53px; }
.thead .c2 { width: 469px; margin-left: 15px; }
.thead .c3 { margin-left: 4px; width: 60px; }
.c4 { width: 90px; margin-left: 15px; }
.tempty { height: 25px; border-bottom: 1px solid #3c3c3c; }
.tfoot { display: flex; align-items: center; height: 28px; padding-right: 10px; }
.prev { margin-left: auto; margin-right: 21px; }

/* dialog */
.modal { position: absolute; left: 460px; top: 106px; width: 397px; height: 378.500px; display: flex; flex-direction: column; border-radius: 4px; background: #fff; box-shadow: 0 0 1px #444, 0 4px 12px rgba(0,0,0,.55); font: 9.300px "Liberation Sans", Arial, sans-serif; color: #333; overflow: hidden; }
.mhead { display: flex; align-items: center; height: 36.500px; padding: 0 10px 0 9px; border-bottom: 1px solid #e5e5e5; font-size: 12px; }
.mhead svg { width: 10px; height: 10px; margin-right: 3px; }
.mhead b { margin-left: auto; color: #bbb; font-size: 14px; line-height: 10px; margin-top: -4px; }
.mbody { display: flex; height: 299.500px; overflow: hidden; border-bottom: 1px solid #e5e5e5; }
.form { flex: 1; min-width: 0; padding-top: 11px; }
.row { display: grid; grid-template-columns: 87px 51.500px 238.500px; height: 22.500px; margin-bottom: 10px; align-items: center; }
.row label { text-align: right; font-weight: 700; white-space: nowrap; letter-spacing: .03px; padding-top: 1px; }
.row i { padding: 1px 0 0 28.500px; font-weight: 700; }
.row.tall { height: 126.500px; align-items: start; line-height: 21px; }
.thumb { width: 132px; height: 100.500px; margin-top: -.500px; border: 1px solid #ddd; border-radius: 3px; padding: 3px; }
.thumb svg { width: 125px; height: 93px; padding: 33px 43.500px 32px 43.500px; background: #d9d9d9; }
.btns { display: flex; gap: 3px; margin-top: 4.500px; }
.x, .open { width: 26px; height: 22.500px; border-radius: 3px; display: grid; place-items: center; border: 1px solid #ccc; background: linear-gradient(#fff, #e3e3e3); }
.open { width: 27px; background: linear-gradient(#337ab7, #265a88); border-color: #245580; }
.x svg { width: 9px; height: 9px; }
.open svg { width: 13px; height: 10px; }
.inp { height: 22.500px; line-height: 22px; border: 1px solid #ccc; border-radius: 3px; padding: 0 7px; color: #a3a3a3; box-shadow: inset 0 1px 1px rgba(0,0,0,.08); }
.pick { display: flex; justify-content: space-between; padding: 0 3px 0 10px; color: #555; }
.pick small { font-size: 6px; color: #333; }
.scroll { flex: none; width: 9px; background: #f1f1f1; display: flex; flex-direction: column; }
.scroll svg { width: 9px; height: 10px; }
.grip { height: 237px; background: #c1c1c1; margin: 0 1px; }
.scroll .down { margin-top: auto; }
.mfoot { display: flex; justify-content: flex-end; gap: 5px; padding: 10px 10px 0 0; }
.close, .save { display: flex; align-items: center; justify-content: center; gap: 2px; width: 54px; height: 22.500px; border: 1px solid #ccc; border-radius: 3px; background: linear-gradient(#fff, #e3e3e3); }
.save { width: 91px; color: #fff; background: linear-gradient(#337ab7, #265a88); border-color: #245580; }
.close svg, .save svg { width: 10px; height: 10px; }
.pointer { position: absolute; left: 688px; top: 246px; width: 9px; height: 14px; }
.fade { position: absolute; inset: 0; background: linear-gradient(to bottom, transparent 380px, rgba(255,255,255,.09) 490px, rgba(255,255,255,.21) 580px, rgba(255,255,255,.28) 660px, rgba(255,255,255,.35) 675px, rgba(255,255,255,.66) 716px); }
.watermark { position: absolute; left: 1210px; top: 634px; font: 700 8.600px "Liberation Sans", sans-serif; color: #333; white-space: nowrap; }

/* player controls */
.chrome { position: absolute; left: 13px; right: 13px; bottom: 0; height: 55px; }
.progress { display: flex; height: 4px; background: #888; }
.played { width: 558px; background: #f00; }
.loaded { width: 169px; background: #5c5c5c; }
.controls { display: flex; align-items: center; height: 52px; fill: #fff; filter: drop-shadow(0 0 1px rgba(0,0,0,.25)); }
.play { width: 18px; height: 22px; margin-left: 17px; }
.next { width: 20px; height: 20px; margin-left: 32px; }
.vol { width: 22px; height: 20px; margin-left: 31px; }
.time { margin-left: 21.500px; font-size: 14.300px; color: #ddd; width: 80px; margin-top: -2px; white-space: nowrap; }
.auto { width: 34px; height: 15px; margin-left: 695.500px; border-radius: 8px; background: #d9d9d9; }
.knob { display: grid; place-items: center; width: 20px; height: 20px; margin: -2.500px 0 0 -1px; border-radius: 50%; background: #8f8f8f; }
.knob svg { width: 9px; height: 10px; }
.cc { width: 26px; height: 20px; margin-left: 27px; }
.gear { position: relative; width: 24px; height: 24px; margin-left: 27px; }
.gear svg { width: 24px; height: 24px; }
.gear em { position: absolute; left: 19px; top: -3px; width: 14px; height: 9px; background: #f00; color: #fff; font-size: 7.500px; line-height: 10px; text-align: center; font-weight: 700; }
.mini { width: 28px; height: 24px; margin-left: 27px; }
.theater { width: 28px; height: 20px; margin-left: 25px; }
.full { width: 24px; height: 24px; margin-left: 27.500px; }
.tip { position: absolute; left: 13px; top: 621px; width: 68px; height: 28px; border-radius: 4px; background: #262626; font-size: 14px; font-weight: 600; line-height: 28px; padding-left: 9px; color: #eee; }

/* video details */
.meta { width: 1275px; margin: 16px 0 0 80px; }
.meta h1 { margin: 0; font: 600 19px/28px "Noto Sans", sans-serif; color: #f1f1f1; white-space: nowrap; letter-spacing: -.13px; }
.lead { letter-spacing: -.245px; }
.caps { letter-spacing: .46px; }
.owner { display: flex; align-items: center; height: 44px; margin-top: 10px; }
.avatar { width: 44px; height: 44px; border-radius: 50%; background: #f8f9fd; overflow: hidden; }
.avatar text { font: 4px Roboto, sans-serif; fill: #999; }
.chan { width: 172px; margin: 1px 0 0 13px; display: flex; flex-direction: column; }
.chan strong { font-size: 18px; line-height: 25px; font-weight: 600; color: #f1f1f1; letter-spacing: -.25px; }
.chan span { font-size: 13px; line-height: 19px; color: #999; letter-spacing: .05px; }
.subscribe { width: 104px; height: 39px; margin: 3px 0 0 -13px; border-radius: 20px; background: rgba(255,255,255,.025); font-size: 15px; font-weight: 600; line-height: 40px; padding-left: 17px; letter-spacing: .1px; }
.actions { display: flex; align-items: center; margin: 3px 0 0 472px; font-size: 15px; font-weight: 600; letter-spacing: .1px; }
.act { display: flex; align-items: center; gap: 8px; flex: none; }
.act svg { width: 23px; height: 23px; }
.like { width: 81px; }
.dislike { width: 65px; }
.share { width: 110px; gap: 7px; }
.clip { width: 96px; gap: 7px; }
.keep { width: 102px; }
.dots { width: 18px; height: 4px; fill: #fff; }

/* related thumbnails, clipped by the window edge */
.related { position: absolute; left: 1381px; top: 80px; width: 4px; display: flex; flex-direction: column; }
.related i { border-radius: 6px 0 0 6px; height: 100px; margin-bottom: 14px; }
.related .r1 { height: 64px; margin-bottom: 102px; background: linear-gradient(#14130f, #3a2410); }
.related .r2 { height: 104px; margin-bottom: 15px; background: linear-gradient(#968b76, #716550 60%, #26231a); }
.related .r3 { background: linear-gradient(#050505 25%, #999 26%, #0b120e 32%, #000); margin-bottom: 15px; }
.related .r4 { background: linear-gradient(#fff 25%, #294e9b 30%, #eef 60%, #fff); margin-bottom: 12px; }
.related .r5 { background: linear-gradient(#152433, #07140c); }
.related .r6 { background: linear-gradient(#555c57, #161b17); height: 98px; margin-bottom: 17px; }
.related .r7 { height: 92px; background: linear-gradient(#0008bd 34px, #fff 34px, #fff 66px, #0008bd 66px); }
.ink { position: absolute; left: 0; top: 0; width: 1385px; height: 910px; fill: none; stroke: #80ff80; stroke-width: 3; }
.ink g { stroke-width: 9; stroke-linecap: round; stroke-linejoin: round; }
```
